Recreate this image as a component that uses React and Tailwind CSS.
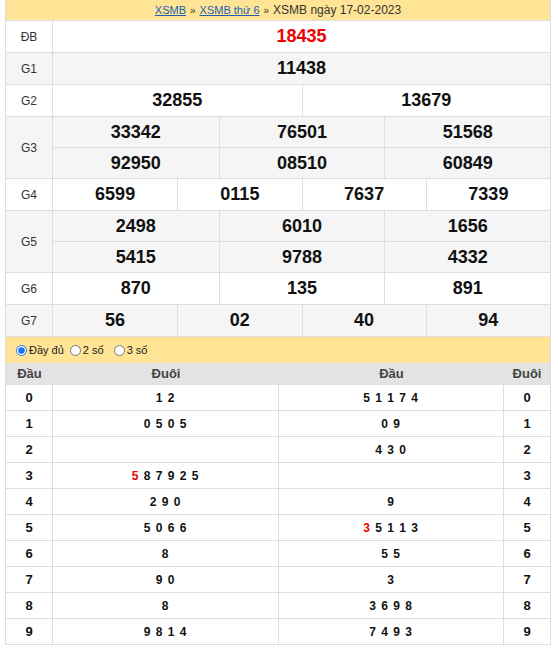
import React from "react";

const prizes = [
  { name: "ĐB", rows: [["18435"]], red: true },
  { name: "G1", rows: [["11438"]] },
  { name: "G2", rows: [["32855", "13679"]] },
  { name: "G3", rows: [["33342", "76501", "51568"], ["92950", "08510", "60849"]] },
  { name: "G4", rows: [["6599", "0115", "7637", "7339"]] },
  { name: "G5", rows: [["2498", "6010", "1656"], ["5415", "9788", "4332"]] },
  { name: "G6", rows: [["870", "135", "891"]] },
  { name: "G7", rows: [["56", "02", "40", "94"]] },
];

// loto: [đầu, đuôi list, đầu list, which side has the red digit]
const loto = [
  ["0", "1 2", "5 1 1 7 4"],
  ["1", "0 5 0 5", "0 9"],
  ["2", "", "4 3 0"],
  ["3", "5 8 7 9 2 5", "", "left"],
  ["4", "2 9 0", "9"],
  ["5", "5 0 6 6", "3 5 1 1 3", "right"],
  ["6", "8", "5 5"],
  ["7", "9 0", "3"],
  ["8", "8", "3 6 9 8"],
  ["9", "9 8 1 4", "7 4 9 3"],
];

function Digits({ text, red }) {
  if (!red || !text) return <span>{text}</span>;
  return (
    <span className="whitespace-pre">
      <span className="text-[#e00]">{text[0]}</span>
      {text.slice(1)}
    </span>
  );
}

function PrizeRow({ prize, index }) {
  const bg = index % 2 === 1 ? "bg-[#f5f5f5]" : "bg-white";
  const cols = prize.rows[0].length;
  const colClass =
    cols === 1 ? "grid-cols-1" : cols === 2 ? "grid-cols-2" : cols === 3 ? "grid-cols-3" : "grid-cols-4";
  const cellH = prize.rows.length > 1 ? "h-[30px]" : "h-[31px]";
  return (
    <div className={`flex border-b border-[#ddd] ${bg}`}>
      <div className="w-[47px] shrink-0 flex items-center justify-center text-[12px] text-[#333] border-r border-[#ddd]">
        {prize.name}
      </div>
      <div className="flex-1 flex flex-col">
        {prize.rows.map((row, ri) => (
          <div
            key={ri}
            className={`grid ${colClass} ${ri > 0 ? "border-t border-[#ddd]" : ""}`}
          >
            {row.map((n, ci) => (
              <div
                key={ci}
                className={`${cellH} flex items-center justify-center text-[18px] font-bold ${
                  prize.red ? "text-[#e00]" : "text-[#111]"
                } ${ci > 0 ? "border-l border-[#ddd]" : ""}`}
              >
                {n}
              </div>
            ))}
          </div>
        ))}
      </div>
    </div>
  );
}

export default function App() {
  return (
    <div className="w-[558px] bg-white pl-[5px] pr-[7px] font-['Liberation_Sans',Arial,sans-serif]">
      <div className="border-x border-[#ddd]">
        <div className="h-[21px] bg-[#ffe495] flex items-center justify-center text-[12px] text-[#333] border-b border-[#ddd]">
          <a href="#" className="text-[#1a5fb4] underline text-[11px]">XSMB</a>
          <span className="mx-[4px] text-[10px]">»</span>
          <a href="#" className="text-[#1a5fb4] underline text-[11px]">XSMB thứ 6</a>
          <span className="mx-[4px] text-[10px]">»</span>
          <span>XSMB ngày 17-02-2023</span>
        </div>
        {prizes.map((p, i) => (
          <PrizeRow key={p.name} prize={p} index={i} />
        ))}
        <div className="h-[26px] bg-[#ffe495] flex items-center pl-[10px] text-[11px] text-[#222] gap-[6px]">
          <label className="flex items-center gap-[2px]">
            <input type="radio" name="mode" defaultChecked className="w-[11px] h-[11px] m-0 accent-[#1a73e8]" />
            Đầy đủ
          </label>
          <label className="flex items-center gap-[2px]">
            <input type="radio" name="mode" className="w-[11px] h-[11px] m-0" />
            2 số
          </label>
          <label className="flex items-center gap-[2px] ml-[4px]">
            <input type="radio" name="mode" className="w-[11px] h-[11px] m-0" />
            3 số
          </label>
        </div>
        <div className="flex h-[22px] bg-[#e3e3e3] text-[13px] font-bold text-[#444] items-center">
          <div className="w-[47px] text-center">Đầu</div>
          <div className="w-[226px] text-center">Đuôi</div>
          <div className="w-[225px] text-center">Đầu</div>
          <div className="flex-1 text-center">Đuôi</div>
        </div>
        {loto.map(([d, tails, heads, red]) => (
          <div key={d} className="flex h-[26px] border-b border-[#ddd] font-bold text-[#111] items-stretch">
            <div className="w-[47px] border-r border-[#ddd] flex items-center justify-center text-[13px]">{d}</div>
            <div className="w-[226px] border-r border-[#ddd] flex items-center justify-center text-[12px] tracking-[1px]">
              <Digits text={tails} red={red === "left"} />
            </div>
            <div className="w-[225px] border-r border-[#ddd] flex items-center justify-center text-[12px] tracking-[1px]">
              <Digits text={heads} red={red === "right"} />
            </div>
            <div className="flex-1 flex items-center justify-center text-[13px]">{d}</div>
          </div>
        ))}
      </div>
    </div>
  );
}
